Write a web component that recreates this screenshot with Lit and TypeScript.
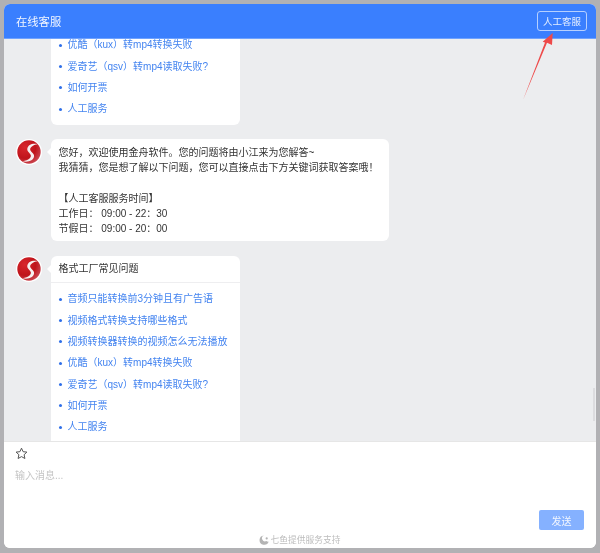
import { LitElement, html, css, svg } from "lit";
import { customElement } from "lit/decorators.js";

const logo = html`<div class="avatar">
  <svg viewBox="0 0 26 26" width="26" height="26">
    <defs>
      <radialGradient id="rg" cx="32%" cy="30%" r="85%">
        <stop offset="0" stop-color="#d8262c"/>
        <stop offset="0.55" stop-color="#bf141b"/>
        <stop offset="0.85" stop-color="#c8404a"/>
        <stop offset="1" stop-color="#e6a0a6"/>
      </radialGradient>
    </defs>
    <circle cx="13" cy="13" r="13" fill="#fff"/>
    <circle cx="13" cy="13" r="11.700" fill="url(#rg)"/>
    <path d="M21.500 5.300C16.800 3.800 11.800 6 11.300 9.800c-.4 2.800 3 4.300 3.500 6.400.5 2-1.700 5-8.300 6 5.600 1.500 11.200-.9 11.600-5 .3-2.900-3.600-4.400-3.900-6.500-.3-2.200 2.500-4.600 7.300-5.400z" fill="#f6f0f0"/>
  </svg>
</div>`;

const faqs = ["音频只能转换前3分钟且有广告语", "视频格式转换支持哪些格式", "视频转换器转换的视频怎么无法播放", "优酷（kux）转mp4转换失败", "爱奇艺（qsv）转mp4读取失败?", "如何开票", "人工服务"];

@customElement("app-root")
export class AppRoot extends LitElement {
  static styles = css`
    :host { display: block; width: 600px; height: 553px; font-family: "Liberation Sans", "Noto Sans CJK SC", sans-serif; }
    .page { box-sizing: border-box; width: 600px; height: 553px; background: #b1b1b4; padding: 4px 4.500px 5px 4px; overflow: hidden; position: relative; filter: blur(0.35px); }
    .win { height: 100%; display: flex; flex-direction: column; border-radius: 6px; overflow: hidden; background: #fff; }
    header { flex: none; height: 34px; background: #3a7ffe; border-bottom: 1px solid #6fa2fe; display: flex; align-items: center; justify-content: space-between; padding: 0 8.500px 0 12px; color: #fff; }
    .title { font-size: 11.300px; color: #f2f6ff; }
    .human { box-sizing: border-box; width: 50px; height: 20px; border: 1px solid #b6d0ff; border-radius: 3px; font-size: 9.500px; color: #e3edff; display: flex; align-items: center; justify-content: center; }
    .msgs { flex: 1; min-height: 0; background: #ecedef; overflow: hidden; display: flex; flex-direction: column; padding-left: 12px; border-bottom: 1px solid #e6e6e6; }
    .row { display: flex; align-items: flex-start; gap: 9px; margin-top: 15px; flex: none; }
    .row.first { margin-top: 0; }
    .row.second { margin-top: 14px; }
    .avatar { flex: none; width: 26px; height: 26px; margin-left: -0.500px; }
    .avatar svg { display: block; }
    .card { position: relative; background: #fff; border-radius: 6px; width: 189px; font-size: 10px; color: #333; }
    .card::before { content: ""; position: absolute; left: -4px; top: 9px; border: 4px solid transparent; border-left: 0; border-right-color: #fff; }
    .card.cont { border-radius: 0 0 6px 6px; }
    .card.cont::before { display: none; }
    .cont ul { padding: 0 8px 5.450px 17px; }
    .cont li:first-child { height: 16.650px; line-height: 12px; }
    .cont li:first-child::before { top: 4.500px; }
    .head { height: 26.500px; line-height: 26px; padding-left: 8px; border-bottom: 1px solid #eeeef0; }
    ul { margin: 0; padding: 5px 8px 12px 17px; list-style: none; }
    li { position: relative; height: 21.300px; line-height: 21.300px; color: #4484f0; white-space: nowrap; }
    li::before { content: ""; position: absolute; left: -8.500px; top: 9.500px; width: 3px; height: 3px; border-radius: 50%; background: #2f6fe8; }
    .bubble { width: 338px; box-sizing: border-box; padding: 6px 8px 4.800px; line-height: 15.200px; }
    .bubble div { white-space: pre; height: 15.200px; }
    .input { flex: none; height: 106px; background: #fff; display: flex; flex-direction: column; padding: 5px 11.500px 0 11px; box-sizing: border-box; }
    .star { height: 13px; display: block; }
    .ph { margin-top: 8px; font-size: 10px; line-height: 15px; color: #c4c4c4; }
    .sendrow { display: flex; justify-content: flex-end; margin-bottom: 1px; margin-top: auto; }
    .send { width: 45px; height: 20px; background: #85b1ff; border-radius: 2px; color: #f0f5ff; font-size: 10px; display: flex; align-items: center; justify-content: center; }
    .foot { height: 17px; display: flex; align-items: center; justify-content: center; gap: 2px; font-size: 8.750px; color: #bdbdbd; }
    .thumb { position: absolute; left: 592.700px; top: 388px; width: 2.800px; height: 33px; background: #dcdcdf; }
    .arrow { position: absolute; left: 0; top: 0; width: 600px; height: 553px; pointer-events: none; }
  `;

  private list(items: string[]) {
    return html`<ul>${items.map((t) => html`<li>${t}</li>`)}</ul>`;
  }

  render() {
    return html`<div class="page">
      <div class="win">
        <header>
          <span class="title">在线客服</span>
          <span class="human">人工客服</span>
        </header>
        <div class="msgs">
          <div class="row first">
            <div class="avatar"></div>
            <div class="card cont">${this.list(faqs.slice(3))}</div>
          </div>
          <div class="row second">
            ${logo}
            <div class="card bubble">
              <div>您好，欢迎使用金舟软件。您的问题将由小江来为您解答~</div>
              <div>我猜猜，您是想了解以下问题，您可以直接点击下方关键词获取答案哦！</div>
              <div> </div>
              <div>【人工客服服务时间】</div>
              <div>工作日： 09:00 - 22：30</div>
              <div>节假日： 09:00 - 20：00</div>
            </div>
          </div>
          <div class="row">
            ${logo}
            <div class="card">
              <div class="head">格式工厂常见问题</div>
              ${this.list(faqs)}
            </div>
          </div>
        </div>
        <div class="input">
          <svg class="star" viewBox="0 0 13 13" width="13" height="13">
            <path d="M6.500 1.200l1.600 3.500 3.800.4-2.800 2.600.8 3.800-3.400-1.900-3.400 1.900.8-3.800L1.100 5.100l3.800-.4z" fill="none" stroke="#555" stroke-width="1" stroke-linejoin="round"/>
          </svg>
          <div class="ph">输入消息...</div>
          <div class="sendrow"><div class="send">发送</div></div>
          <div class="foot">
            <svg viewBox="0 0 10 10" width="10" height="10">
              <path d="M4.800.4A4.700 4.700 0 1 0 9.700 6.600 2.800 2.800 0 0 1 7.400 6 2.600 2.600 0 0 1 4.800.4z" fill="#b4b4b4"/>
              <circle cx="7.700" cy="3.400" r="1.100" fill="#b4b4b4"/>
            </svg>
            <span>七鱼提供服务支持</span>
          </div>
        </div>
      </div>
      <div class="thumb"></div>
      <svg class="arrow" viewBox="0 0 600 553">
        ${svg`<path d="M552.700 33 L552 45 L547 42.800 L523 100 L545 42.500 L542.700 41.700 Z" fill="#ee4a4a"/>`}
      </svg>
    </div>`;
  }
}
